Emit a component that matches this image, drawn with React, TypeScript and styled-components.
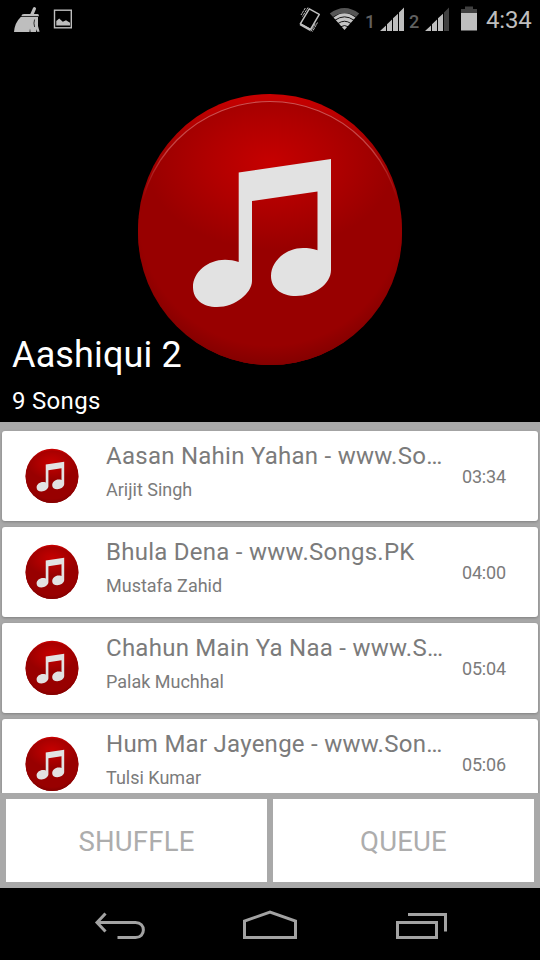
import React from "react";
import styled, { createGlobalStyle } from "styled-components";

const GlobalStyle = createGlobalStyle`
  * { box-sizing: border-box; }
  html, body { margin: 0; padding: 0; background: #000; }
  body { font-family: Roboto, "Noto Sans", sans-serif; }
`;

const Screen = styled.main`
  width: 540px;
  height: 960px;
  display: flex;
  flex-direction: column;
  background: #000;
  overflow: hidden;
`;

const StatusBar = styled.header`
  height: 38px;
  flex: none;
  display: flex;
  align-items: flex-start;
  justify-content: space-between;
`;

const StatusGroup = styled.div`
  display: flex;
`;

const StatusIcons = styled.svg`
  display: block;
  flex: none;
`;

const Clock = styled.time`
  width: 54px;
  font-size: 24px;
  line-height: 40px;
  letter-spacing: -0.2px;
  color: #bebebe;
`;

const Hero = styled.section`
  height: 384px;
  flex: none;
  display: grid;
  grid-template-columns: 1fr;
  grid-template-rows: 1fr;
  > * { grid-area: 1 / 1; }
`;

const HeroArt = styled.div`
  justify-self: center;
  padding-top: 47px;
`;

const Disc = styled.svg`
  display: block;
  flex: none;
`;

const HeroCaption = styled.div`
  align-self: end;
  padding: 0 12px 6px;
  display: flex;
  flex-direction: column;
  gap: 9px;
  color: #fff;
`;

const AlbumTitle = styled.h1`
  margin: 0;
  font-size: 36px;
  line-height: 44px;
  letter-spacing: 0.15px;
  font-weight: 400;
`;

const AlbumCount = styled.p`
  margin: 0;
  font-size: 24px;
  line-height: 30px;
  letter-spacing: 0.3px;
`;

const SongList = styled.ul`
  list-style: none;
  margin: 0;
  height: 371px;
  flex: none;
  padding: 9px 2px 0;
  display: flex;
  flex-direction: column;
  gap: 6px;
  background: #a9a9a9;
  overflow: hidden;
`;

const SongCard = styled.li`
  height: 90px;
  flex: none;
  display: grid;
  grid-template-columns: 104px 338px 1fr;
  align-items: start;
  background: #fff;
  border-radius: 3px;
  box-shadow: 0 1px 3px rgba(0, 0, 0, 0.25);
`;

const Thumb = styled.div`
  padding: 16px 0 0 21.5px;
`;

const SongText = styled.div`
  padding-top: 10px;
  display: flex;
  flex-direction: column;
  gap: 8px;
  min-width: 0;
  color: #7b7b7b;
`;

const SongTitle = styled.div`
  font-size: 24px;
  line-height: 30px;
  letter-spacing: 0.26px;
  white-space: nowrap;
`;

const Artist = styled.div`
  font-size: 18px;
  line-height: 22px;
`;

const Duration = styled.time`
  padding: 35px 0 0 18px;
  font-size: 18px;
  line-height: 22px;
  letter-spacing: -0.2px;
  color: #7b7b7b;
`;

const Actions = styled.div`
  height: 95px;
  flex: none;
  display: grid;
  grid-template-columns: 1fr 1fr;
  gap: 6px;
  padding: 6px;
  background: #a9a9a9;
`;

const ActionButton = styled.button`
  border: 0;
  margin: 0;
  padding: 3px 0 0;
  background: #fff;
  color: #adadad;
  font-family: inherit;
  font-size: 27.5px;
  letter-spacing: 0.2px;
  line-height: 34px;
`;

const NavBar = styled.nav`
  height: 72px;
  flex: none;
  display: grid;
  grid-template-columns: 180px 180px 180px;
  justify-content: center;
  background: #000;
`;

const NavIcon = styled.svg`
  display: block;
  fill: none;
  stroke: #a3a3a3;
  stroke-width: 3;
`;

function MusicDisc({ id, width, height, rim }: { id: string; width: number; height: number; rim?: boolean }) {
  return (
    <Disc width={width} height={height} viewBox="0 0 280 290" preserveAspectRatio="none">
      <defs>
        <radialGradient id={`${id}-glow`} gradientUnits="userSpaceOnUse" cx="0" cy="0" r="1" gradientTransform="translate(140 78) scale(124 86)">
          <stop offset="0" stopColor="#c60000" />
          <stop offset="0.5" stopColor="#b00000" />
          <stop offset="1" stopColor="#980000" />
        </radialGradient>
        <linearGradient id={`${id}-lip`} x1="0" y1="0" x2="0" y2="1">
          <stop offset="0" stopColor="#c80000" />
          <stop offset="0.2" stopColor="#a40000" />
          <stop offset="0.45" stopColor="#960000" />
          <stop offset="1" stopColor="#850000" />
        </linearGradient>
        <radialGradient id={`${id}-edge`} gradientUnits="userSpaceOnUse" cx="140" cy="129" r="151">
          <stop offset="0.87" stopColor="#700000" stopOpacity="0" />
          <stop offset="1" stopColor="#700000" stopOpacity="0.5" />
        </radialGradient>
        <linearGradient id={`${id}-line`} x1="0" y1="16" x2="0" y2="115" gradientUnits="userSpaceOnUse">
          <stop offset="0" stopColor="#d46060" stopOpacity="0.85" />
          <stop offset="0.5" stopColor="#d06060" stopOpacity="0.7" />
          <stop offset="1" stopColor="#d05050" stopOpacity="0" />
        </linearGradient>
      </defs>
      <ellipse cx="140" cy="144.5" rx="132" ry="135.5" fill={`url(#${id}-lip)`} />
      <ellipse cx="140" cy="148" rx="132" ry="132" fill={`url(#${id}-glow)`} />
      <ellipse cx="140" cy="148" rx="132" ry="132" fill={`url(#${id}-edge)`} />
      {rim && (
        <ellipse cx="140" cy="148" rx="131.5" ry="131.5" fill="none" stroke={`url(#${id}-line)`} strokeWidth="1.2" />
      )}
      <path
        fill="#e2e2e2"
        d="M108.7 87.5 L201 74 V185 C201 199 184 211 166 211 C151 211 141 203 141 191 C141 176 156 163 173 163 C178 163 183 163.500 187.500 165.300 V106.500 L122 116 V196 C122 208 105 222 87 222 C73 222 63 214.500 63 202 C63 187 78 174.700 95 174.700 C100 174.700 104 175.500 108.700 177 Z"
      />
    </Disc>
  );
}

const songs = [
  { title: "Aasan Nahin Yahan - www.So…", artist: "Arijit Singh", time: "03:34" },
  { title: "Bhula Dena - www.Songs.PK", artist: "Mustafa Zahid", time: "04:00" },
  { title: "Chahun Main Ya Naa - www.S…", artist: "Palak Muchhal", time: "05:04" },
  { title: "Hum Mar Jayenge - www.Son…", artist: "Tulsi Kumar", time: "05:06" },
];

const SimLabel = styled.span<{ $width: number }>`
  width: ${(p) => p.$width}px;
  font-size: 18px;
  font-weight: 500;
  line-height: 43px;
  text-indent: -1px;
  color: #606060;
`;

export default function App() {
  return (
    <Screen>
      <GlobalStyle />
      <StatusBar>
        <StatusGroup>
          <StatusIcons width="80" height="38" viewBox="0 0 80 38">
            <path fill="#bebebe" d="M30.300 14 L33 8 Q34 6.300 35.500 7.400 Q36.500 8.200 35.800 9.500 L33.900 14 H37.500 Q39 14 39 16.300 H21.300 Q21.500 14 24 14 Z M20.800 17 H38 V26 L39.600 31.800 H37 L36 29 V32 H30.500 L30 28.500 L29.500 32 H14 Q14.800 22.500 20.800 17 Z" />
            <path d="M34.600 19.500 Q33.300 23 34.600 27" stroke="#222" fill="none" strokeWidth="0.9" />
            <rect x="54.500" y="10.200" width="16.800" height="17.600" fill="none" stroke="#bebebe" strokeWidth="1.4" />
            <path fill="#bebebe" d="M56.300 25.500 V21 L59.200 18.600 L62.800 21.800 L66 20.300 L70 22.800 V25.500 Z" />
          </StatusIcons>
        </StatusGroup>
        <StatusGroup>
          <StatusIcons width="68" height="38" viewBox="298 0 68 38">
            <g fill="none" stroke="#c0c0c0" strokeLinejoin="round">
              <path strokeWidth="1.5" d="M309.300 8.800 L319.300 14.300 L310.500 29.500 L300.300 23.800 Z" />
              <path strokeWidth="2.400" d="M300.300 24.300 L310.500 30" />
              <path strokeWidth="1" d="M308 7.500 L302.500 16.500 M305.300 8 L301 15 M317.500 22.500 L312.500 31.500 M315.200 23.800 L310.800 31.500" strokeDasharray="2.500 .6" />
            </g>
            <path fill="#555" d="M329.800 13.500 Q344.500 2.500 359.200 13.500 L356 17 Q344.500 9 333 17 Z" />
            <path fill="#c4c4c4" d="M344.500 30 L333.500 17.500 Q344.500 9 355.500 17.500 Z" />
            <path fill="none" stroke="#000" strokeWidth="0.900" d="M335 20.200 Q344.500 13.500 354 20.200 M338 23.500 Q344.500 19 351 23.500 M341 26.700 Q344.500 24.400 348 26.700" />
          </StatusIcons>
          <SimLabel $width={14}>1</SimLabel>
          <StatusIcons width="30" height="38" viewBox="380 0 30 38">
            <path fill="#bebebe" d="M380 31 L386 25.500 V31 Z M387 31 V24.300 L392 19.500 V31 Z M393 31 V18.300 L398 13.700 V31 Z M399 31 V12.500 L404 7.500 V31 Z" />
          </StatusIcons>
          <SimLabel $width={15}>2</SimLabel>
          <StatusIcons width="61" height="38" viewBox="425 0 61 38">
            <path fill="#bebebe" d="M425 31 L431 25.500 V31 Z M432 31 V24.300 L437 19.500 V31 Z M438 31 V18.300 L443 13.700 V31 Z" />
            <path fill="#404040" d="M444 31 V12.500 L449 7.500 V31 Z M461 13 V9 H465 V6.500 H473 V9 H477 V13 Z" />
            <rect x="461" y="13" width="16" height="17.500" fill="#bebebe" />
          </StatusIcons>
          <Clock>4:34</Clock>
        </StatusGroup>
      </StatusBar>
      <Hero>
        <HeroArt>
          <MusicDisc id="cover" width={280} height={290} rim />
        </HeroArt>
        <HeroCaption>
          <AlbumTitle>Aashiqui 2</AlbumTitle>
          <AlbumCount>9 Songs</AlbumCount>
        </HeroCaption>
      </Hero>
      <SongList>
        {songs.map((song, i) => (
          <SongCard key={song.title}>
            <Thumb>
              <MusicDisc id={`song-${i}`} width={56} height={58} />
            </Thumb>
            <SongText>
              <SongTitle>{song.title}</SongTitle>
              <Artist>{song.artist}</Artist>
            </SongText>
            <Duration>{song.time}</Duration>
          </SongCard>
        ))}
      </SongList>
      <Actions>
        <ActionButton>SHUFFLE</ActionButton>
        <ActionButton>QUEUE</ActionButton>
      </Actions>
      <NavBar>
        <NavIcon width="180" height="72" viewBox="0 0 180 72">
          <path d="M105.500 25.500 L97 34.500 L105.500 43.500 M97 34.500 H135.500 C146 34.500 146 49.500 135.500 49.500 H117.500" />
        </NavIcon>
        <NavIcon width="180" height="72" viewBox="180 0 180 72">
          <path d="M244.500 49.500 V33 L270 24.200 L295.500 33 V49.500 Z" />
        </NavIcon>
        <NavIcon width="180" height="72" viewBox="360 0 180 72">
          <path d="M397.500 34.500 H436.500 V49.500 H397.500 Z M408 26.500 H445.500 V43.500" />
        </NavIcon>
      </NavBar>
    </Screen>
  );
}
